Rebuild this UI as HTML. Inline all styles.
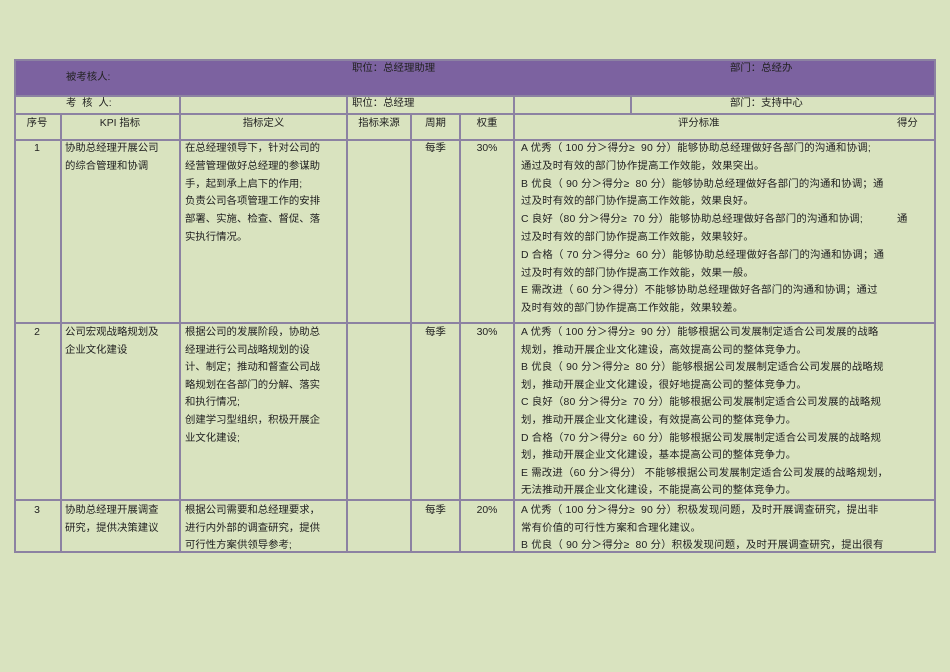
<!DOCTYPE html>
<html><head><meta charset="utf-8"><style>
body{margin:0;width:950px;height:672px;background:#d9e3bf;position:relative;overflow:hidden;font-family:"Liberation Sans","Noto Sans CJK SC",sans-serif;font-size:10.4px;color:#222}
.h,.v{position:absolute;background:#8c82a2}
.h{height:1.5px}.v{width:1.5px}
.t{position:absolute;white-space:nowrap;line-height:17.8px}
.c{text-align:center}
.k{letter-spacing:0.2px}
</style></head><body>
<div style="position:absolute;left:14px;top:60px;width:921px;height:35px;background:#7c62a0"></div>
<div class="h" style="left:14px;top:59px;width:922px"></div>
<div class="h" style="left:14px;top:95px;width:922px"></div>
<div class="h" style="left:14px;top:113px;width:922px"></div>
<div class="h" style="left:14px;top:139px;width:922px"></div>
<div class="h" style="left:14px;top:322px;width:922px"></div>
<div class="h" style="left:14px;top:499px;width:922px"></div>
<div class="h" style="left:14px;top:551px;width:922px"></div>
<div class="v" style="left:14px;top:59px;height:494px"></div>
<div class="v" style="left:934px;top:59px;height:494px"></div>
<div class="v" style="left:179px;top:95px;height:458px"></div>
<div class="v" style="left:346px;top:95px;height:458px"></div>
<div class="v" style="left:513px;top:95px;height:458px"></div>
<div class="v" style="left:630px;top:95px;height:18px"></div>
<div class="v" style="left:60px;top:113px;height:440px"></div>
<div class="v" style="left:410px;top:113px;height:440px"></div>
<div class="v" style="left:459px;top:113px;height:440px"></div>

<div class="t" style="left:66px;top:69px">被考核人:</div>
<div class="t" style="left:352px;top:60px">职位：总经理助理</div>
<div class="t" style="left:730px;top:60px">部门：总经办</div>
<div class="t" style="left:66px;top:95px">考&nbsp;&nbsp;核&nbsp;&nbsp;人:</div>
<div class="t" style="left:352px;top:95px">职位：总经理</div>
<div class="t" style="left:730px;top:95px">部门：支持中心</div>

<div class="t c" style="left:14px;width:46px;top:115px">序号</div>
<div class="t c" style="left:60px;width:120px;top:115px">KPI 指标</div>
<div class="t c" style="left:180px;width:167px;top:115px">指标定义</div>
<div class="t c" style="left:347px;width:64px;top:115px">指标来源</div>
<div class="t c" style="left:411px;width:49px;top:115px">周期</div>
<div class="t c" style="left:460px;width:54px;top:115px">权重</div>
<div class="t" style="left:678px;top:115px">评分标准</div>
<div class="t" style="left:897px;top:115px">得分</div>

<div class="t c" style="left:14px;width:46px;top:140px">1</div>
<div class="t" style="left:65px;top:140px">协助总经理开展公司<br>的综合管理和协调</div>
<div class="t" style="left:185px;top:140px">在总经理领导下，针对公司的<br>经营管理做好总经理的参谋助<br>手，起到承上启下的作用;<br>负责公司各项管理工作的安排<br>部署、实施、检查、督促、落<br>实执行情况。</div>
<div class="t c" style="left:411px;width:49px;top:140px">每季</div>
<div class="t c" style="left:460px;width:54px;top:140px">30%</div>
<div class="t k" style="left:521px;top:140px">A 优秀（ 100 分＞得分≥&nbsp; 90 分）能够协助总经理做好各部门的沟通和协调;<br>通过及时有效的部门协作提高工作效能，效果突出。<br>B 优良（ 90 分＞得分≥&nbsp; 80 分）能够协助总经理做好各部门的沟通和协调；通<br>过及时有效的部门协作提高工作效能，效果良好。<br>C 良好（80 分＞得分≥&nbsp; 70 分）能够协助总经理做好各部门的沟通和协调;&nbsp;&nbsp;&nbsp;&nbsp;&nbsp;&nbsp;&nbsp;&nbsp;&nbsp;&nbsp;&nbsp;通<br>过及时有效的部门协作提高工作效能，效果较好。<br>D 合格（ 70 分＞得分≥&nbsp; 60 分）能够协助总经理做好各部门的沟通和协调；通<br>过及时有效的部门协作提高工作效能，效果一般。<br>E 需改进（ 60 分＞得分）不能够协助总经理做好各部门的沟通和协调；通过<br>及时有效的部门协作提高工作效能，效果较差。</div>

<div class="t c" style="left:14px;width:46px;top:324px;line-height:17.6px">2</div>
<div class="t" style="left:65px;top:324px;line-height:17.6px">公司宏观战略规划及<br>企业文化建设</div>
<div class="t" style="left:185px;top:324px;line-height:17.6px">根据公司的发展阶段，协助总<br>经理进行公司战略规划的设<br>计、制定；推动和督查公司战<br>略规划在各部门的分解、落实<br>和执行情况;<br>创建学习型组织，积极开展企<br>业文化建设;</div>
<div class="t c" style="left:411px;width:49px;top:324px">每季</div>
<div class="t c" style="left:460px;width:54px;top:324px">30%</div>
<div class="t k" style="left:521px;top:324px;line-height:17.6px">A 优秀（ 100 分＞得分≥&nbsp; 90 分）能够根据公司发展制定适合公司发展的战略<br>规划，推动开展企业文化建设，高效提高公司的整体竞争力。<br>B 优良（ 90 分＞得分≥&nbsp; 80 分）能够根据公司发展制定适合公司发展的战略规<br>划，推动开展企业文化建设，很好地提高公司的整体竞争力。<br>C 良好（80 分＞得分≥&nbsp; 70 分）能够根据公司发展制定适合公司发展的战略规<br>划，推动开展企业文化建设，有效提高公司的整体竞争力。<br>D 合格（70 分＞得分≥&nbsp; 60 分）能够根据公司发展制定适合公司发展的战略规<br>划，推动开展企业文化建设，基本提高公司的整体竞争力。<br>E 需改进（60 分＞得分） 不能够根据公司发展制定适合公司发展的战略规划，<br>无法推动开展企业文化建设，不能提高公司的整体竞争力。</div>

<div class="t c" style="left:14px;width:46px;top:502px;line-height:17.5px">3</div>
<div class="t" style="left:65px;top:502px;line-height:17.5px">协助总经理开展调查<br>研究，提供决策建议</div>
<div class="t" style="left:185px;top:502px;line-height:17.5px">根据公司需要和总经理要求，<br>进行内外部的调查研究，提供<br>可行性方案供领导参考;</div>
<div class="t c" style="left:411px;width:49px;top:502px">每季</div>
<div class="t c" style="left:460px;width:54px;top:502px">20%</div>
<div class="t k" style="left:521px;top:502px;line-height:17.5px">A 优秀（ 100 分＞得分≥&nbsp; 90 分）积极发现问题，及时开展调查研究，提出非<br>常有价值的可行性方案和合理化建议。<br>B 优良（ 90 分＞得分≥&nbsp; 80 分）积极发现问题，及时开展调查研究，提出很有</div>
</body></html>
